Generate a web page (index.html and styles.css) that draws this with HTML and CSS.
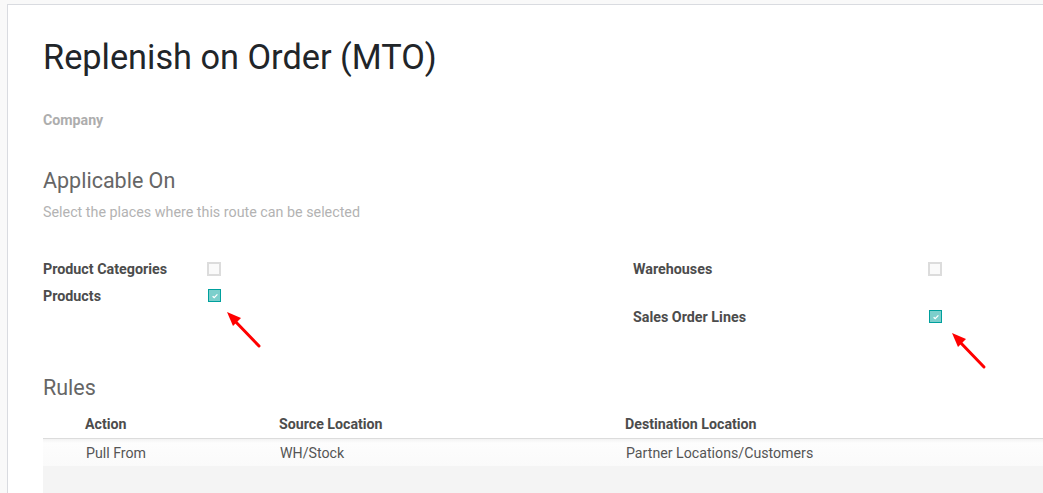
FILE: index.html
```html
<!DOCTYPE html>
<html>
<head>
<meta charset="utf-8">
<link rel="stylesheet" href="styles.css">
</head>
<body>
<div class="sheet">
  <h1 class="title">Replenish on Order (MTO)</h1>
  <div class="company">Company</div>

  <h2 class="section">Applicable On</h2>
  <div class="hint">Select the places where this route can be selected</div>

  <div class="groups">
    <div class="group group-left">
      <div class="field">
        <span class="label">Product Categories</span>
        <span class="cb"></span>
      </div>
      <div class="field">
        <span class="label">Products</span>
        <span class="cb checked">
          <svg viewBox="0 0 10 10" width="8" height="8"><path d="M2 5.2 L4 7 L8 3" fill="none" stroke="#fff" stroke-width="1.6"/></svg>
        </span>
        <svg class="arrow" width="40" height="42" viewBox="0 0 40 42"><path d="M34 36 L8 9" stroke="#f00" stroke-width="3" fill="none" stroke-linecap="round"/><path d="M2 2 L16 8 L8 16 Z" fill="#f00"/></svg>
      </div>
    </div>
    <div class="group group-right">
      <div class="field">
        <span class="label">Warehouses</span>
        <span class="cb"></span>
      </div>
      <div class="field field-gap">
        <span class="label">Sales Order Lines</span>
        <span class="cb checked">
          <svg viewBox="0 0 10 10" width="8" height="8"><path d="M2 5.2 L4 7 L8 3" fill="none" stroke="#fff" stroke-width="1.6"/></svg>
        </span>
        <svg class="arrow" width="40" height="42" viewBox="0 0 40 42"><path d="M34 36 L8 9" stroke="#f00" stroke-width="3" fill="none" stroke-linecap="round"/><path d="M2 2 L16 8 L8 16 Z" fill="#f00"/></svg>
      </div>
    </div>
  </div>

  <h2 class="section rules-title">Rules</h2>
  <div class="table">
    <div class="thead">
      <span class="c0"></span>
      <span class="c1">Action</span>
      <span class="c2">Source Location</span>
      <span class="c3">Destination Location</span>
    </div>
    <div class="trow">
      <span class="c0"></span>
      <span class="c1">Pull From</span>
      <span class="c2">WH/Stock</span>
      <span class="c3">Partner Locations/Customers</span>
    </div>
    <div class="tempty"></div>
  </div>
</div>
</body>
</html>
```

FILE: styles.css
```css
html, body {
  margin: 0;
  padding: 0;
  background: #f9f9f9;
  overflow: hidden;
}
body {
  font-family: Roboto, "Noto Sans", sans-serif;
  height: 493px;
}
.sheet {
  margin: 4px 0 0 7px;
  width: 1036px;
  height: 489px;
  overflow: hidden;
  background: #fff;
  border: 1px solid #d9dbe0;
  border-right: none;
  border-bottom: none;
  box-sizing: border-box;
  padding: 29px 0 0 35px;
}
.title {
  margin: 0;
  font-size: 34.3px;
  line-height: 46px;
  font-weight: 400;
  color: #212529;
}
.company {
  margin-top: 30px;
  font-size: 14.2px;
  font-weight: 700;
  line-height: 20px;
  color: #adadad;
}
.section {
  margin: 36px 0 0 0;
  font-size: 21.5px;
  font-weight: 400;
  line-height: 30px;
  color: #666;
}
.hint {
  margin-top: 6px;
  font-size: 14.3px;
  line-height: 20px;
  color: #b3b3b3;
}
.groups {
  display: flex;
  margin-top: 33px;
}
.group-left { width: 590px; }
.group-left .label { width: 164px; }
.group-right .label { width: 295px; }
.field {
  display: flex;
  align-items: center;
  height: 27px;
  position: relative;
}
.field-gap { margin-top: 21px; }
.label {
  font-size: 14.3px;
  font-weight: 700;
  line-height: 20px;
  color: #4c4c4c;
  flex: none;
}
.cb {
  width: 14px;
  height: 14px;
  box-sizing: border-box;
  border: 2px solid #dcdcdc;
  background: #fafafa;
  display: flex;
  align-items: center;
  justify-content: center;
}
.cb.checked {
  width: 13px;
  height: 13px;
  margin-left: 1px;
  border: 1px solid #00a09d;
  background: #7ccfcc;
}
.arrow {
  position: absolute;
  top: 28px;
}
.group-left .arrow { left: 182px; }
.group-right .arrow { left: 317px; }
.rules-title { margin-top: 43px; }
.table {
  margin-top: 8px;
}
.thead, .trow {
  display: flex;
  font-size: 14.2px;
  line-height: 20px;
}
.thead {
  font-weight: 700;
  color: #4c4c4c;
  padding: 3px 0 4px;
  border-bottom: 1px solid #dcdcdc;
}
.trow {
  color: #555;
  padding: 4px 0 3px 1px;
  background: linear-gradient(#f3f3f3, #fdfdfd 4px, #fafafa);
}
.c0 { width: 42px; flex: none; }
.c1 { width: 194px; flex: none; }
.c2 { width: 346px; flex: none; }
.tempty {
  height: 60px;
  background: #f4f4f4;
}
```
